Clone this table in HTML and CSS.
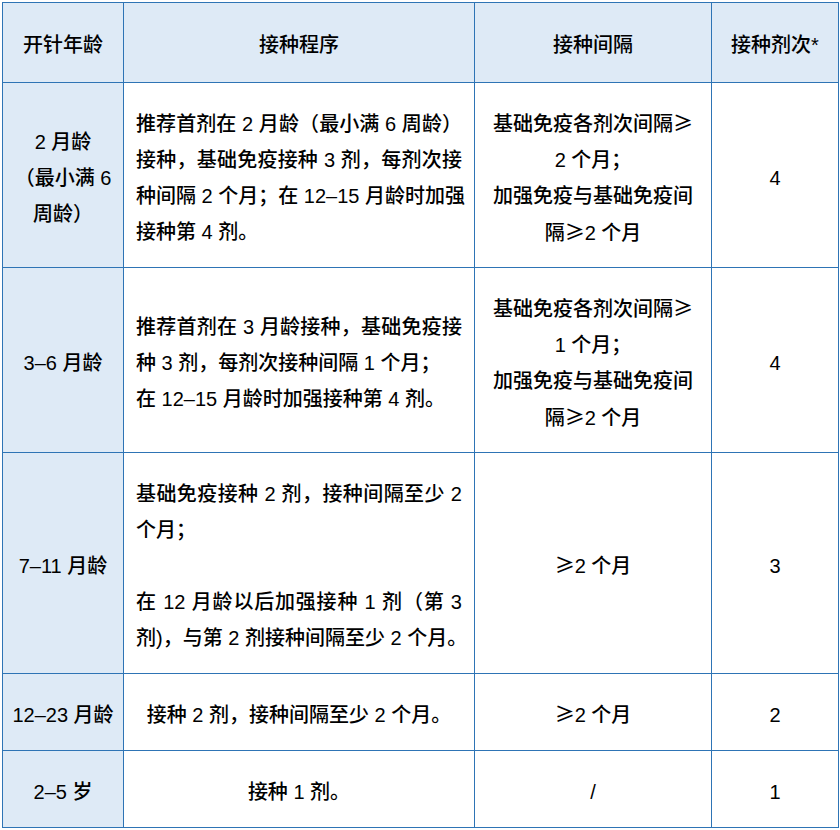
FILE: index.html
```html
<!DOCTYPE html>
<html lang="zh-CN">
<head>
<meta charset="utf-8">
<title>接种程序</title>
<link rel="stylesheet" href="styles.css">
</head>
<body>
<table class="schedule">
  <colgroup>
    <col class="c-age">
    <col class="c-proc">
    <col class="c-int">
    <col class="c-dose">
  </colgroup>
  <thead>
    <tr class="r-head">
      <th class="age">开针年龄</th>
      <th>接种程序</th>
      <th>接种间隔</th>
      <th>接种剂次*</th>
    </tr>
  </thead>
  <tbody>
    <tr class="r-tall">
      <td class="age"><span class="ln">2 月龄</span><span class="ln">（最小满 6</span><span class="ln">周龄）</span></td>
      <td class="proc">
        <span class="ln j">推荐首剂在 2 月龄（最小满 6 周龄）</span>
        <span class="ln j">接种，基础免疫接种 3 剂，每剂次接</span>
        <span class="ln j">种间隔 2 个月；在 12–15 月龄时加强</span>
        <span class="ln">接种第 4 剂。</span>
      </td>
      <td class="mid">
        <span class="ln">基础免疫各剂次间隔<span class="cjk">≥</span></span>
        <span class="ln">2 个月；</span>
        <span class="ln">加强免疫与基础免疫间</span>
        <span class="ln">隔<span class="cjk">≥</span>2 个月</span>
      </td>
      <td class="mid">4</td>
    </tr>
    <tr class="r-tall">
      <td class="age">3–6 月龄</td>
      <td class="proc">
        <span class="ln j">推荐首剂在 3 月龄接种，基础免疫接</span>
        <span class="ln">种 3 剂，每剂次接种间隔 1 个月；</span>
        <span class="ln">在 12–15 月龄时加强接种第 4 剂。</span>
      </td>
      <td class="mid">
        <span class="ln">基础免疫各剂次间隔<span class="cjk">≥</span></span>
        <span class="ln">1 个月；</span>
        <span class="ln">加强免疫与基础免疫间</span>
        <span class="ln">隔<span class="cjk">≥</span>2 个月</span>
      </td>
      <td class="mid">4</td>
    </tr>
    <tr class="r-taller">
      <td class="age">7–11 月龄</td>
      <td class="proc">
        <span class="ln j">基础免疫接种 2 剂，接种间隔至少 2</span>
        <span class="ln">个月；</span>
        <span class="ln">&nbsp;</span>
        <span class="ln j">在 12 月龄以后加强接种 1 剂（第 3</span>
        <span class="ln j">剂)，与第 2 剂接种间隔至少 2 个月。</span>
      </td>
      <td class="mid"><span class="cjk">≥</span>2 个月</td>
      <td class="mid">3</td>
    </tr>
    <tr class="r-short">
      <td class="age">12–23 月龄</td>
      <td class="mid">接种 2 剂，接种间隔至少 2 个月。</td>
      <td class="mid"><span class="cjk">≥</span>2 个月</td>
      <td class="mid">2</td>
    </tr>
    <tr class="r-short">
      <td class="age">2–5 岁</td>
      <td class="mid">接种 1 剂。</td>
      <td class="mid">/</td>
      <td class="mid">1</td>
    </tr>
  </tbody>
</table>
</body>
</html>
```

FILE: styles.css
```css
html, body {
  margin: 0;
  padding: 0;
  background: #ffffff;
}

body {
  padding: 2px 0 0 2px;
  font-family: "Liberation Sans", "Noto Sans CJK SC", sans-serif;
  font-size: 20px;
  line-height: 36px;
  color: #000000;
}

.schedule {
  border-collapse: collapse;
  table-layout: fixed;
  width: 836px;
}

.c-age { width: 121px; }
.c-proc { width: 351px; }
.c-int { width: 237px; }
.c-dose { width: 127px; }

.schedule th,
.schedule td {
  border: 1px solid #2e74b5;
  vertical-align: middle;
  text-align: center;
  font-weight: 500;
  padding: 5px 12px 0 12px;
  white-space: nowrap;
}

.schedule thead th {
  background: #deeaf6;
}

.schedule .age {
  background: #deeaf6;
  padding-left: 6px;
  padding-right: 6px;
}

.r-head { height: 80px; }
.r-tall { height: 185px; }
.r-taller { height: 221px; }
.r-short { height: 77px; }

.ln {
  display: block;
}

.schedule .proc {
  text-align: left;
}

.schedule .proc .j {
  text-align: justify;
  text-align-last: justify;
}

.cjk {
  font-family: "Noto Sans CJK SC", sans-serif;
}
```
